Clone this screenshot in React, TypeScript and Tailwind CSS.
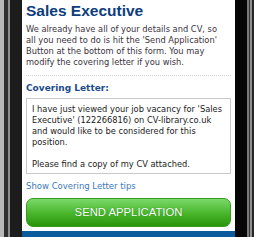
export default function App() {
  return (
    <div className="flex h-[237px] w-[254px] overflow-hidden bg-white">
      {/* left side of the phone */}
      <div className="flex h-full w-[22px] shrink-0">
        <div className="w-[4px] bg-[#b8b8b8]" />
        <div className="w-[4px] bg-[#2e2e2e]" />
        <div className="w-[2px] bg-[#8c8c8c]" />
        <div className="w-[12px] bg-[#1c1c1c]" />
      </div>

      <div className="flex h-full w-[213px] shrink-0 flex-col bg-white">
        <div className="flex flex-1 flex-col px-[4px]" style={{ fontFamily: '"DejaVu Sans", Verdana, sans-serif' }}>
          <h1 className="mt-[1px] font-['Liberation_Sans',Arial,sans-serif] text-[15.5px] font-bold leading-[20px] text-[#0d3d7c]">
            Sales Executive
          </h1>
          <p className="mt-[3px] whitespace-nowrap text-[8.3px] leading-[11px] text-[#3a3340]">
            We already have all of your details and CV, so<br />
            all you need to do is hit the 'Send Application'<br />
            Button at the bottom of this form. You may<br />
            modify the covering letter if you wish.
          </p>
          <div className="mt-[7px] border-t border-dotted border-[#d4d4d4]" />
          <h2 className="mt-[5px] text-[9px] font-bold leading-[14px] text-[#1b4b8c]">Covering Letter:</h2>
          <div className="mt-[3px] h-[76px] w-[205px] whitespace-nowrap border border-[#c9c9c9] px-[5px] py-[5px] text-[8.3px] leading-[11px] text-[#222]">
            <p>
              I have just viewed your job vacancy for 'Sales<br />
              Executive' (122266816) on CV-library.co.uk<br />
              and would like to be considered for this<br />
              position.
            </p>
            <p className="mt-[11px]">Please find a copy of my CV attached.</p>
          </div>
          <a className="mt-[6px] text-[8.5px] leading-[12px] text-[#3b78bd]">Show Covering Letter tips</a>
          <button className="mt-[6px] flex h-[29px] w-[205px] items-center justify-center rounded-[7px] border border-[#3c9a1c] bg-gradient-to-b from-[#7ad96a] via-[#4bb82d] to-[#279608] font-['Liberation_Sans',Arial,sans-serif] text-[11.3px] text-white [text-shadow:0_0_1px_rgba(0,80,0,0.6)]">
            SEND APPLICATION
          </button>
        </div>
        <div className="h-[6px] bg-[#0b5a9c]" />
      </div>

      {/* right side of the phone */}
      <div className="flex h-full w-[19px] shrink-0">
        <div className="w-[12px] bg-[#060606]" />
        <div className="w-[2px] bg-[#7a7a7a]" />
        <div className="w-[1px] bg-[#3a3a3a]" />
        <div className="w-[2px] bg-[#8e8e8e]" />
        <div className="w-[2px] bg-[#262626]" />
      </div>
    </div>
  );
}
